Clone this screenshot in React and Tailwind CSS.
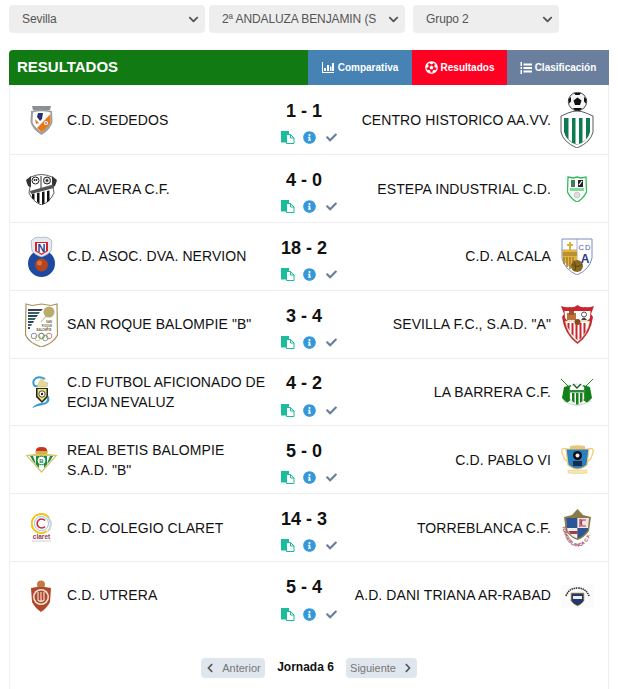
import React from "react";
import { FaChevronDown, FaChevronLeft, FaChevronRight, FaInfoCircle, FaCheck, FaFutbol } from "react-icons/fa";

const S = ({ w, h, children }) => (
  <svg width={w} height={h} viewBox={`0 0 ${w} ${h}`} className="block shrink-0">{children}</svg>
);

const Sededos = () => (
  <S w={25} h={30}>
    <path d="M3 1 L22 1 L21 5 L4 5 Z" fill="#8b8f92" />
    <path d="M2 6 Q12 3 23 6 L23.500 17 Q22 24 12.500 30 Q3 24 1.500 17 Z" fill="#9b9ea1" />
    <path d="M4 7.500 Q12 5 21.500 7.500 L21.500 17 Q20 22 12.500 27 Q5 22 3.500 17 Z" fill="#fff" />
    <path d="M21.500 9 L21.500 17 Q20 22 12.500 27 L8 23 Z" fill="#e5781c" />
    <path d="M9 8 L14 8 L13 14 L11 16 L8 12 Z" fill="#27316f" />
    <path d="M6 14 L10 18 L7 19 Z" fill="#e5781c" />
    <circle cx="17" cy="18" r="2" fill="#fff" />
    <circle cx="17" cy="18" r="0.800" fill="#333" />
  </S>
);

const Centro = () => (
  <S w={34} h={56}>
    <path d="M1 24 L8 21 Q17 17 26 21 L33 24 L33 40 Q31 50 17 56 Q3 50 1 40 Z" fill="#fff" stroke="#333" strokeWidth="0.800" />
    <path d="M4 26 L30 26 L30 40 Q28 49 17 53 Q6 49 4 40 Z" fill="#0f7a50" />
    <path d="M8.500 26 H12 V50 L8.500 47.500 Z M15.500 26 H19 V52.500 L15.500 52.500 Z M22.500 26 H26 V47.500 L22.500 50 Z" fill="#fff" />
    <circle cx="17.500" cy="9.500" r="9.200" fill="#f5f5f5" stroke="#222" strokeWidth="0.800" />
    <path d="M17.500 5.500 L21.500 8.500 L20 13 L15 13 L13.500 8.500 Z" fill="#111" />
    <path d="M14 1 L21 1 L19.500 3 L15.500 3 Z M24 5 L26.500 7 L26 11.500 L24 9.500 Z M11 5 L8.500 7 L9 11.500 L11 9.500 Z M13 16 L22 16 L20 18.500 L15 18.500 Z" fill="#111" />
  </S>
);

const Calavera = () => (
  <S w={33} h={32}>
    <path d="M6 4 Q16 -1 27 4 L31 9 L28 14 L29 20 Q25 29 16.500 32 Q8 29 4 20 L5 14 L2 9 Z" fill="#fff" stroke="#333" strokeWidth="0.800" />
    <path d="M1 7 L6 3 L6 14 L3 13 Z M32 7 L27 3 L27 14 L30 13 Z" fill="#333" />
    <path d="M16 3 V15" stroke="#333" strokeWidth="1" />
    <circle cx="10.500" cy="7.500" r="3.500" fill="#fff" stroke="#222" strokeWidth="1" />
    <circle cx="9.500" cy="7" r="0.900" fill="#222" />
    <circle cx="11.500" cy="7" r="0.900" fill="#222" />
    <circle cx="22" cy="7.500" r="3.500" fill="#ddd" stroke="#222" strokeWidth="1" />
    <circle cx="22" cy="7.500" r="1.300" fill="#222" />
    <path d="M5 18 L28 11.500 L29 15 L6 21 Z" fill="#555" />
    <path d="M7 21 L9.500 20.500 V27 L7 25 Z M12 20 L14.500 19.500 V30.500 L12 29 Z M17 19 L19.500 18.500 V30.500 L17 31.500 Z M22 18 L24.500 17.500 V27.500 L22 29.500 Z" fill="#111" />
  </S>
);

const Nervion = () => (
  <S w={27} h={41}>
    <circle cx="13.500" cy="27.500" r="13.500" fill="#1d4aa0" />
    <path d="M3 5 Q7 0 13.500 1.500 Q20 0 24 5 L23 15 Q20 19 13.500 21 Q7 19 4 15 Z" fill="#e7e9f0" stroke="#9aa3bb" strokeWidth="0.700" />
    <path d="M7 6 H20 V15 L13.500 19 L7 15 Z" fill="#d6232a" />
    <path d="M9 7 H18 V15 L13.500 17.500 L9 15 Z" fill="#fff" />
    <text x="13.500" y="15.500" textAnchor="middle" fontFamily="Liberation Sans" fontWeight="700" fontSize="11" fill="#1d3f94">N</text>
    <circle cx="13.500" cy="29" r="6.500" fill="#b5451c" />
    <circle cx="11.500" cy="27" r="2.500" fill="#d9733f" />
  </S>
);

const Roque = () => (
  <S w={33} h={44}>
    <path d="M1 1 L7 2.500 L16.500 1 L26 2.500 L32 1 L32.500 32 Q29 40 16.500 44 Q4 40 0.500 32 Z" fill="#fff" stroke="#a8925a" strokeWidth="1.200" />
    <path d="M3 6 H18 L16 8 H3 Z" fill="#3a3a6d" />
    <path d="M3 9 H15 L13.500 11 H3 Z" fill="#2f6b52" />
    <path d="M3 12 H13 L11.500 14 H3 Z" fill="#3a3a6d" />
    <path d="M3 15 H11 L9.500 17 H3 Z" fill="#2f6b52" />
    <path d="M3 18 H9 L8 20 H3 Z" fill="#3a3a6d" />
    <path d="M3 21 H7 L6 23 H3 Z" fill="#2f6b52" />
    <path d="M3 24 H5 L5 26 H3 Z" fill="#3a3a6d" />
    <circle cx="24" cy="9" r="5.500" fill="#b9ad6b" />
    <path d="M16 19 L21 13" stroke="#b9ad6b" strokeWidth="1" />
    <text x="24" y="20" textAnchor="middle" fontFamily="Liberation Sans" fontWeight="700" fontSize="2.800" fill="#6b6240">SAN</text>
    <text x="22" y="24" textAnchor="middle" fontFamily="Liberation Sans" fontWeight="700" fontSize="2.800" fill="#6b6240">ROQUE</text>
    <text x="19" y="28" textAnchor="middle" fontFamily="Liberation Sans" fontWeight="700" fontSize="2.800" fill="#6b6240">BALOMPIE</text>
    <g fill="none" strokeWidth="0.700">
      <circle cx="9" cy="33" r="2.800" stroke="#3e66b3" />
      <circle cx="16.500" cy="33" r="2.800" stroke="#333" />
      <circle cx="24" cy="33" r="2.800" stroke="#c44" />
      <circle cx="12.700" cy="35" r="2.800" stroke="#d9b23a" />
      <circle cx="20.300" cy="35" r="2.800" stroke="#3c9a56" />
    </g>
  </S>
);

const Ecija = () => (
  <S w={21} h={32}>
    <path d="M14 3 Q9 0 5 2 Q1 5 3 9 Q4 11 7 10" fill="none" stroke="#3f9bd0" strokeWidth="2" />
    <path d="M8 6 L11 2 L13 6 L17 7 L16 11 L6 11 Z" fill="#e7d98a" stroke="#aaa" strokeWidth="0.400" />
    <path d="M5 12 H17 V21 L11 27 L5 21 Z" fill="#222" />
    <path d="M6.500 13 H15.500 V20 L11 25 L6.500 20 Z" fill="#f2e46a" />
    <circle cx="11" cy="18" r="3.200" fill="#fff" stroke="#222" strokeWidth="0.800" />
    <circle cx="11" cy="18" r="1.200" fill="#222" />
    <path d="M18 20 Q20 28 12 29 Q6 30 1 32 Q5 27 12 27 Q17 26 16 21 Z" fill="#3f9bd0" />
  </S>
);

const Betis = () => (
  <S w={33} h={27}>
    <path d="M11 6 Q10 1 16.500 1 Q23 1 22 6 Z" fill="#c8322a" />
    <path d="M10 5 H23 L22 8 H11 Z" fill="#d8b13c" />
    <path d="M0.500 9 L10 8 H23 L32.500 9 L16.500 27 Z" fill="#d9c46b" />
    <path d="M3 10 L30 10 L16.500 25 Z" fill="#fff" />
    <path d="M5 10 H8 L11 18 L8 15 Z M11 10 H14 V22 L11 18.500 Z M19 10 H22 V18.500 L19 22 Z M25 10 H28 L25 15 L22 18 Z" fill="#1d8a45" />
    <circle cx="16.500" cy="14.500" r="4.300" fill="#fff" stroke="#1d8a45" strokeWidth="1" />
    <text x="16.500" y="17" textAnchor="middle" fontFamily="Liberation Sans" fontWeight="700" fontSize="6" fill="#1d8a45">B</text>
  </S>
);

const Claret = () => (
  <S w={21} h={29}>
    <path d="M16 18 A9.500 9.500 0 1 1 18 5" fill="none" stroke="#f6c21c" strokeWidth="2" />
    <path d="M17.500 5 A9.500 9.500 0 0 1 17 18" fill="none" stroke="#c9d4dc" strokeWidth="2" />
    <circle cx="10.500" cy="10.500" r="7" fill="none" stroke="#7ec5e8" strokeWidth="1" />
    <path d="M14 7.500 A4.500 4.500 0 1 0 14 13.500" fill="none" stroke="#c4283c" strokeWidth="1.600" />
    <text x="10.500" y="26" textAnchor="middle" fontFamily="Liberation Sans" fontWeight="700" fontSize="6.500" fill="#8e3b50">claret</text>
    <path d="M1 28 H20" stroke="#cfcfcf" strokeWidth="1" />
  </S>
);

const Utrera = () => (
  <S w={22} h={32}>
    <circle cx="11" cy="4.500" r="4" fill="#c57a45" />
    <path d="M1 8 L7 7 H15 L21 8 L20 22 Q17 28 11 32 Q5 28 2 22 Z" fill="#b0492a" />
    <circle cx="11" cy="17" r="8" fill="#f4e6dc" />
    <circle cx="11" cy="17" r="6.500" fill="#b0492a" />
    <path d="M8 12 V20 Q11 23 14 20 V12 M11 12 V22" fill="none" stroke="#f4e6dc" strokeWidth="1.100" />
  </S>
);

const Estepa = () => (
  <S w={20} h={26}>
    <path d="M1 1 L6 2 L10 1 L14 2 L19 1 L19.500 16 Q16 23 10 26 Q4 23 0.500 16 Z" fill="#fff" stroke="#2fbd5b" strokeWidth="1.300" />
    <path d="M4 4 H8 V11 H4 Z" fill="#44795a" />
    <path d="M11 4 H16 V11 H11 Z" fill="#222" />
    <path d="M12 9 L15 5" stroke="#fff" strokeWidth="1.200" />
    <path d="M3 12 H17 V15 H3 Z" fill="#7fdc98" />
    <circle cx="10" cy="19" r="3" fill="#ddd" stroke="#aaa" strokeWidth="0.500" />
  </S>
);

const Alcala = () => (
  <S w={32} h={37}>
    <path d="M1 1 H31 V20 Q29 31 16 37 Q3 31 1 20 Z" fill="#fff" stroke="#7c8cc0" strokeWidth="1" />
    <path d="M16 1 V24 M1 12 H16" stroke="#7c8cc0" strokeWidth="0.700" />
    <path d="M1.500 12 H16 V33 Q4 28 1.500 20 Z" fill="#e3b341" />
    <path d="M1.500 15 H16 M1.500 17 H16" stroke="#7b5a1c" strokeWidth="0.800" />
    <path d="M3 19 V26 M6 19 V29 M9 19 V31 M12 19 V32" stroke="#a97f2a" strokeWidth="1.500" />
    <path d="M8 4 H10 V6 H12 V8 H10 V12 H8 V8 H6 V6 H8 Z" fill="#d8b13c" />
    <circle cx="16" cy="28" r="6" fill="#8a6a20" />
    <path d="M11 26 Q16 31 21 26 M13 23 Q16 28 14 33" fill="none" stroke="#4a3a10" strokeWidth="0.700" />
    <text x="24" y="12" textAnchor="middle" fontFamily="Liberation Sans" fontSize="7.500" letterSpacing="1" fill="#4a5b9c">CD</text>
    <text x="24" y="25" textAnchor="middle" fontFamily="Liberation Sans" fontWeight="700" fontSize="12" fill="#2e3e80">A</text>
  </S>
);

const Sevilla = () => (
  <S w={33} h={39}>
    <path d="M0 1 Q5 3 9 2 Q13 3 16.500 0 Q20 3 24 2 Q28 3 33 1 L30 9 L32 12 Q30 29 16.500 39 Q3 29 1 12 L3 9 Z" fill="#c8252c" />
    <path d="M3.500 6 H29.500 L29 13 Q26 18 16.500 19 Q7 18 4 13 Z" fill="#fff" />
    <path d="M4 16 H29 Q27 29 16.500 37 Q6 29 4 16 Z" fill="#fff" stroke="#b08a3c" strokeWidth="0.500" />
    <path d="M6.500 18 H8.500 V25.500 L6.500 22 Z M10.500 18 H12.500 V31 L10.500 29 Z M14.500 18 H16.500 V35 L14.500 33.500 Z M18.500 18 H20.500 V33 L18.500 34.500 Z M22.500 18 H24.500 V27 L22.500 30 Z" fill="#c8252c" />
    <path d="M6 8 L15 8 L15 15 L6 15 Z" fill="#b8743a" />
    <path d="M8 6 H13 V10 H8 Z" fill="#a0522d" />
    <circle cx="23" cy="9.500" r="2.500" fill="none" stroke="#555" strokeWidth="1" />
    <path d="M20 15 Q23 10 26 15" fill="#444" />
    <circle cx="16.500" cy="17" r="3" fill="#8a4a1f" />
  </S>
);

const Barrera = () => (
  <S w={32} h={27}>
    <path d="M0 0 L8 8 M32 0 L24 8" stroke="#2d8a30" strokeWidth="1" />
    <path d="M3 8 L10 6 L11 20 L6 24 L1 19 Z M29 8 L22 6 L21 20 L26 24 L31 19 Z" fill="#13801a" />
    <path d="M9 8 Q16 2 23 8 L23 20 Q20 27 16 27 Q12 27 9 20 Z" fill="#fff" stroke="#bbb" strokeWidth="0.500" />
    <path d="M9 11 H23 V13.500 H9 Z" fill="#2c8a3a" />
    <path d="M11 14 L13.500 14 V24 L11 22 Z M15 14 H17.500 V26 H15 Z M19 14 H21.500 V22 L19 24 Z" fill="#13801a" />
    <path d="M12 5 L16 9 L20 5" fill="none" stroke="#1a5e24" strokeWidth="1.400" />
    <path d="M2 22 Q16 30 30 22" fill="none" stroke="#c8d8c8" strokeWidth="1" />
  </S>
);

const Pablo = () => (
  <S w={33} h={29}>
    <path d="M6 4 Q0 2 1 7 Q2 14 8 18 M27 4 Q33 2 32 7 Q31 14 25 18" fill="none" stroke="#f2cc74" strokeWidth="1.300" />
    <path d="M5 4 H28 L26 20 Q21 24 16.500 24 Q12 24 7 20 Z" fill="#2a7fc1" stroke="#f2cc74" strokeWidth="1.200" />
    <path d="M9 1 Q16.500 -0.500 24 1 V4 H9 Z" fill="#e6c77a" />
    <circle cx="16.500" cy="10.500" r="4.500" fill="#111" />
    <circle cx="16.500" cy="10.500" r="2" fill="#eee" />
    <path d="M12 16 H21 V21 H12 Z" fill="#1d2b4a" />
    <path d="M7 25 H26 V28 Q16.500 29.500 7 28 Z" fill="#f7e5b6" stroke="#e5c877" strokeWidth="0.500" />
  </S>
);

const Torreblanca = () => (
  <S w={31} h={38}>
    <path d="M2 8 L10 6 L15.500 0 L21 6 L29 8 L27 22 Q22 29 15.500 31 Q9 29 4 22 Z" fill="#8a7a4a" />
    <path d="M4 9 H15.500 V29.500 Q9 27.500 5.500 21.500 Z" fill="#eee" />
    <path d="M4 9 L15.500 9 V19 H5 Z" fill="#2c5596" />
    <path d="M15.500 9 H27 L26 19 H15.500 Z" fill="#f1e4e4" />
    <path d="M15.500 19 H26 L25.500 21.500 Q21 27.500 15.500 29.500 Z" fill="#2c5596" />
    <path d="M6.500 22 L15.500 22 V25 H8.500 Z" fill="#a33a4a" />
    <path d="M18 10 V18 M24 11 H18 M24 17 H20 Q18.500 14 20 11" fill="none" stroke="#a33a4a" strokeWidth="1.200" />
    <defs><path id="tb-arc" d="M0.500 17 C2 32 10 37.500 15.500 37.500 C21 37.500 29 32 30.500 17" /></defs>
    <text fontFamily="Liberation Sans" fontWeight="700" fontSize="4.500" fill="#963047">
      <textPath href="#tb-arc" textLength="46">TORREBLANCA C.F.</textPath>
    </text>
  </S>
);

const Triana = () => (
  <S w={33} h={23}>
    <rect x="0" y="0" width="33" height="23" fill="#fbfbfb" />
    <path d="M5 11 Q8 3 16.500 3 Q25 3 28 11" fill="none" stroke="#333" strokeWidth="1.600" strokeDasharray="1.500 0.700" />
    <path d="M10 8 H23 V16 Q20 20 16.500 21 Q13 20 10 16 Z" fill="#24386f" stroke="#c9b46a" strokeWidth="0.800" />
    <path d="M12 11 H21 V14 H12 Z" fill="#eee" />
  </S>
);

const Copy = () => (
  <svg width="14" height="13" viewBox="0 0 14 13" className="block">
    <path d="M0 0 H8 V11.500 H0 Z" fill="#1abc9c" />
    <path d="M5.500 3.500 H9.500 L13 7 V12.500 H5.500 Z" fill="#fff" stroke="#1abc9c" strokeWidth="1" />
    <path d="M9.500 3.500 V7 H13" fill="none" stroke="#1abc9c" strokeWidth="1" />
  </svg>
);

const BarChartIcon = () => (
  <svg width="12" height="11" viewBox="0 0 12 11" className="block" fill="#fff">
    <path d="M0 0 H1 V10 H12 V11 H0 Z" />
    <path d="M2 6 H4 V9 H2 Z M5 3 H7 V9 H5 Z M8 4.500 H9.500 V9 H8 Z M10 1 H12 V9 H10 Z" />
  </svg>
);

const ListIcon = () => (
  <svg width="12" height="12" viewBox="0 0 12 12" className="block" fill="#fff">
    <path d="M0.500 0 H2 V4 H0.500 Z M0.500 5 H2 V7 H0.500 Z M0.500 8 H2 V12 H0.500 Z" />
    <path d="M3.500 1.500 H12 V3.500 H3.500 Z M3.500 5 H12 V7 H3.500 Z M3.500 8.500 H12 V10.500 H3.500 Z" />
  </svg>
);

const rows = [
  [Sededos, "C.D. SEDEDOS", "1 - 1", "CENTRO HISTORICO AA.VV.", Centro, "h-[70px]", ""],
  [Calavera, "CALAVERA C.F.", "4 - 0", "ESTEPA INDUSTRIAL C.D.", Estepa, "h-[68px]", ""],
  [Nervion, "C.D. ASOC. DVA. NERVION", "18 - 2", "C.D. ALCALA", Alcala, "h-[68px]", "pb-[2px]"],
  [Roque, 'SAN ROQUE BALOMPIE "B"', "3 - 4", 'SEVILLA F.C., S.A.D. "A"', Sevilla, "h-[68px]", "pb-[2px]"],
  [Ecija, "C.D FUTBOL AFICIONADO DE ECIJA NEVALUZ", "4 - 2", "LA BARRERA C.F.", Barrera, "h-[67px]", ""],
  [Betis, 'REAL BETIS BALOMPIE S.A.D. "B"', "5 - 0", "C.D. PABLO VI", Pablo, "h-[68px]", ""],
  [Claret, "C.D. COLEGIO CLARET", "14 - 3", "TORREBLANCA C.F.", Torreblanca, "h-[68px]", ""],
  [Utrera, "C.D. UTRERA", "5 - 4", "A.D. DANI TRIANA AR-RABAD", Triana, "h-[68px]", "pb-[2px]"],
];

const Sel = ({ label, className }) => (
  <div className={`h-7 rounded bg-[#eeeeee] text-xs tracking-[-0.1px] text-[#555555] flex items-center justify-between pl-[13px] pr-[6px] ${className}`}>
    <span className="whitespace-nowrap">{label}</span>
    <FaChevronDown className="text-[11px] text-[#555555]" />
  </div>
);

export default function App() {
  return (
    <div className="h-[689px] overflow-hidden bg-white text-[#111111]" style={{ fontFamily: '"Liberation Sans", Arial, sans-serif' }}>
      <div className="pl-[9px] pr-[9px] pt-[5px]">
        <div className="flex h-7">
          <Sel label="Sevilla" className="w-[196px]" />
          <Sel label="2ª ANDALUZA BENJAMIN (S" className="w-[196px] ml-1" />
          <Sel label="Grupo 2" className="w-[146px] ml-2" />
        </div>

        <div className="mt-[17px] flex h-[35px] bg-[#117a13] rounded-tl-sm">
          <div className="flex-1 pl-2 flex items-center text-[15px] font-bold text-white">RESULTADOS</div>
          <div className="w-[104px] bg-[#4682b4] flex items-center justify-center gap-1 text-[10px] font-bold text-white">
            <BarChartIcon /> Comparativa
          </div>
          <div className="w-[95px] bg-[#ff0022] flex items-center justify-center gap-[3px] text-[10px] font-bold text-white">
            <FaFutbol className="text-[13px]" /> Resultados
          </div>
          <div className="w-[102px] bg-[#6a7f9e] flex items-center justify-center gap-[3px] text-[10px] font-bold text-white">
            <ListIcon /> Clasificación
          </div>
        </div>

        <div className="border-x border-[#eeeeee] h-[604px]">
          {rows.map(([L, name, score, away, R, h, nudge], i) => (
            <div key={i} className={`flex items-center ${h} ${i < 7 ? "border-b border-[#eeeeee]" : ""}`}>
              <div className="w-[57px] pl-[6px] pr-[1px] flex justify-center shrink-0"><L /></div>
              <div className={`w-[200px] shrink-0 text-sm tracking-[0.08px] leading-5 ${nudge}`}>{name}</div>
              <div className="w-[68px] ml-[3px] shrink-0 flex flex-col items-center pt-[6px]">
                <div className="text-lg font-bold leading-5 text-[#111111]">{score}</div>
                <div className="flex items-center mt-[10px] h-[14px] ml-[10px]">
                  <Copy />
                  <FaInfoCircle className="text-[13px] text-[#3498db] ml-2" />
                  <FaCheck className="text-[11px] text-[#6a7f9e] ml-[10px]" />
                </div>
              </div>
              <div className={`flex-1 min-w-0 text-sm tracking-[0.08px] text-right whitespace-nowrap ${nudge}`}>{away}</div>
              <div className="w-[57px] pl-[1px] pr-[6px] flex justify-center shrink-0"><R /></div>
            </div>
          ))}
          <div className="flex justify-center items-center mt-[28px]">
            <div className="w-16 h-5 rounded-sm bg-[#e0e6ee] flex items-center justify-center gap-[7px] text-[11px] text-[#777777]">
              <FaChevronLeft className="text-[10px] text-[#555555]" /> Anterior
            </div>
            <div className="w-[81px] text-center text-xs font-bold -mt-[3px]">Jornada 6</div>
            <div className="w-[71px] h-5 rounded-sm bg-[#e0e6ee] flex items-center justify-center gap-[7px] text-[11px] text-[#777777]">
              Siguiente <FaChevronRight className="text-[10px] text-[#555555]" />
            </div>
          </div>
        </div>
      </div>
    </div>
  );
}
